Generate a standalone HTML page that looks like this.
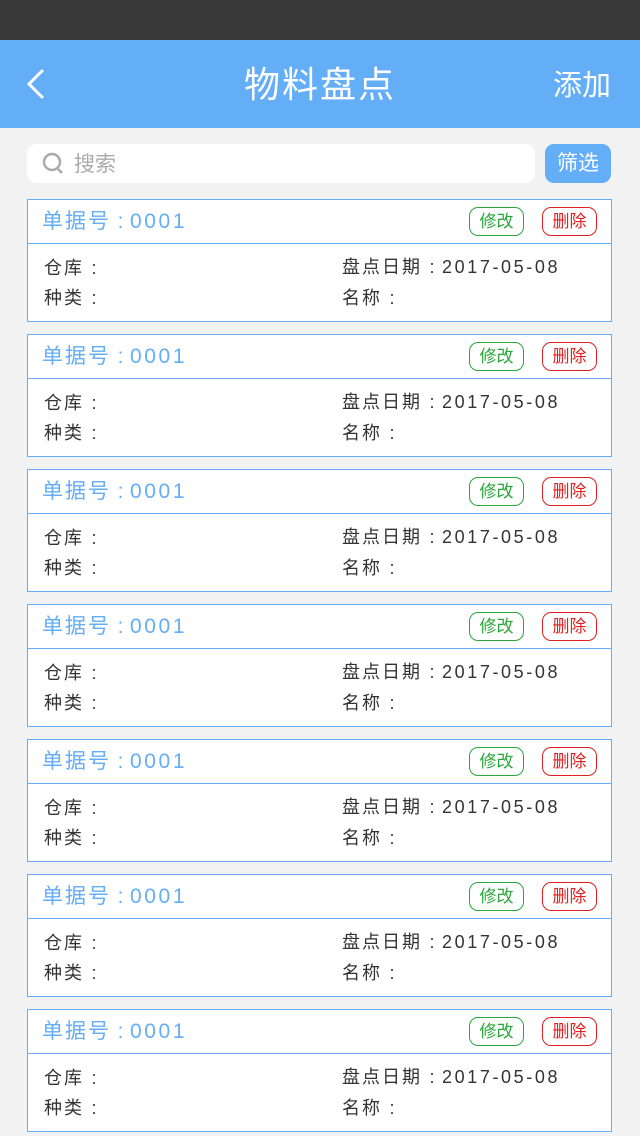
<!DOCTYPE html>
<html><head><meta charset="utf-8"><style>
*{margin:0;padding:0;box-sizing:border-box}
body{width:640px;height:1136px;background:#f2f2f2;font-family:"Liberation Sans","Noto Sans CJK SC",sans-serif;position:relative;overflow:hidden}
.c{display:inline-block;text-align:center;width:20px;letter-spacing:0}
.hd .c{width:19px}
.d{letter-spacing:2.6px}
.status{position:absolute;top:0;left:0;width:640px;height:40px;background:#383838}
.nav{position:absolute;top:40px;left:0;width:640px;height:88px;background:#64adf7;color:#fff}
.nav .t{position:absolute;left:0;width:640px;text-align:center;top:21px;font-size:36px;line-height:48px;letter-spacing:2px}
.nav .a{position:absolute;right:29px;top:26px;font-size:29px;line-height:40px}
.search{position:absolute;left:27px;top:144px;width:508px;height:39px;background:#fff;border-radius:10px}
.search span{position:absolute;left:47px;top:7px;font-size:21px;color:#aaa;line-height:27px}
.filter{position:absolute;left:545px;top:144px;width:66px;height:39px;background:#64adf7;border-radius:9px;color:#fff;font-size:21px;line-height:40px;text-align:center}
.card{position:absolute;left:27px;width:585px;height:123px;background:#fff;border:1px solid #64adf7}
.hd{height:44px;border-bottom:1px solid #64adf7;position:relative}
.hd .no{position:absolute;left:14px;top:8px;font-size:21px;line-height:28px;color:#64adf7;letter-spacing:2px}
.btn{position:absolute;top:7px;width:55px;height:29px;border-radius:9px;font-size:17px;line-height:27px;text-align:center}
.g{left:441px;border:1.5px solid #2aa73a;color:#2aa73a}
.r{left:514px;border:1.5px solid #e02020;color:#e02020}
.row{position:absolute;font-size:18px;color:#333;letter-spacing:2px;line-height:24px}
</style></head><body>
<div class="status"></div>
<div class="nav">
<svg style="position:absolute;left:24px;top:27px" width="24" height="36" viewBox="0 0 24 36"><path d="M19 3 L5 17 L19 31" fill="none" stroke="#fff" stroke-width="3"/></svg>
<div class="t">物料盘点</div><div class="a">添加</div></div>
<div class="search"><svg style="position:absolute;left:15px;top:8px" width="24" height="24" viewBox="0 0 24 24"><circle cx="10" cy="10" r="8" fill="none" stroke="#aaa" stroke-width="2.5"/><path d="M16 17 L20 21" stroke="#aaa" stroke-width="2.5"/></svg><span>搜索</span></div>
<div class="filter">筛选</div>
<div class="card" style="top:199px"><div class="hd"><div class="no">单据号<span class="c">:</span><span class="d">0001</span></div><div class="btn g">修改</div><div class="btn r">删除</div></div><div class="row" style="left:16px;top:56px">仓库<span class="c">:</span></div><div class="row" style="left:314px;top:55px">盘点日期<span class="c">:</span><span class="d">2017-05-08</span></div><div class="row" style="left:16px;top:86px">种类<span class="c">:</span></div><div class="row" style="left:314px;top:86px">名称<span class="c">:</span></div></div>
<div class="card" style="top:334px"><div class="hd"><div class="no">单据号<span class="c">:</span><span class="d">0001</span></div><div class="btn g">修改</div><div class="btn r">删除</div></div><div class="row" style="left:16px;top:56px">仓库<span class="c">:</span></div><div class="row" style="left:314px;top:55px">盘点日期<span class="c">:</span><span class="d">2017-05-08</span></div><div class="row" style="left:16px;top:86px">种类<span class="c">:</span></div><div class="row" style="left:314px;top:86px">名称<span class="c">:</span></div></div>
<div class="card" style="top:469px"><div class="hd"><div class="no">单据号<span class="c">:</span><span class="d">0001</span></div><div class="btn g">修改</div><div class="btn r">删除</div></div><div class="row" style="left:16px;top:56px">仓库<span class="c">:</span></div><div class="row" style="left:314px;top:55px">盘点日期<span class="c">:</span><span class="d">2017-05-08</span></div><div class="row" style="left:16px;top:86px">种类<span class="c">:</span></div><div class="row" style="left:314px;top:86px">名称<span class="c">:</span></div></div>
<div class="card" style="top:604px"><div class="hd"><div class="no">单据号<span class="c">:</span><span class="d">0001</span></div><div class="btn g">修改</div><div class="btn r">删除</div></div><div class="row" style="left:16px;top:56px">仓库<span class="c">:</span></div><div class="row" style="left:314px;top:55px">盘点日期<span class="c">:</span><span class="d">2017-05-08</span></div><div class="row" style="left:16px;top:86px">种类<span class="c">:</span></div><div class="row" style="left:314px;top:86px">名称<span class="c">:</span></div></div>
<div class="card" style="top:739px"><div class="hd"><div class="no">单据号<span class="c">:</span><span class="d">0001</span></div><div class="btn g">修改</div><div class="btn r">删除</div></div><div class="row" style="left:16px;top:56px">仓库<span class="c">:</span></div><div class="row" style="left:314px;top:55px">盘点日期<span class="c">:</span><span class="d">2017-05-08</span></div><div class="row" style="left:16px;top:86px">种类<span class="c">:</span></div><div class="row" style="left:314px;top:86px">名称<span class="c">:</span></div></div>
<div class="card" style="top:874px"><div class="hd"><div class="no">单据号<span class="c">:</span><span class="d">0001</span></div><div class="btn g">修改</div><div class="btn r">删除</div></div><div class="row" style="left:16px;top:56px">仓库<span class="c">:</span></div><div class="row" style="left:314px;top:55px">盘点日期<span class="c">:</span><span class="d">2017-05-08</span></div><div class="row" style="left:16px;top:86px">种类<span class="c">:</span></div><div class="row" style="left:314px;top:86px">名称<span class="c">:</span></div></div>
<div class="card" style="top:1009px"><div class="hd"><div class="no">单据号<span class="c">:</span><span class="d">0001</span></div><div class="btn g">修改</div><div class="btn r">删除</div></div><div class="row" style="left:16px;top:56px">仓库<span class="c">:</span></div><div class="row" style="left:314px;top:55px">盘点日期<span class="c">:</span><span class="d">2017-05-08</span></div><div class="row" style="left:16px;top:86px">种类<span class="c">:</span></div><div class="row" style="left:314px;top:86px">名称<span class="c">:</span></div></div>
</body></html>
